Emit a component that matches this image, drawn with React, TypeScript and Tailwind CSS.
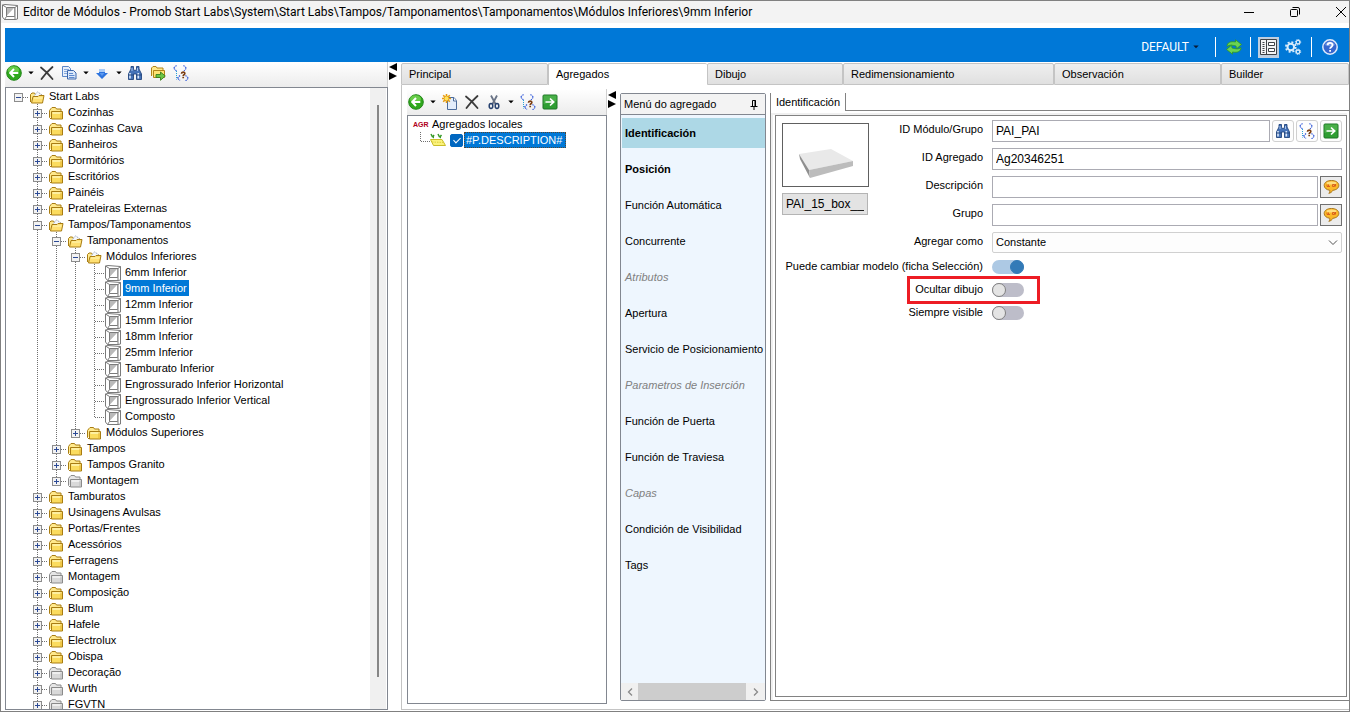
import React, { useState } from "react";

type Kind = "folder" | "gray" | "module";
type NodeData = { label: string; kind?: Kind; open?: boolean; children?: NodeData[]; selected?: boolean };

const leaf = (label: string, selected = false): NodeData => ({ label, kind: "module", selected });
const closed = (label: string, kind: Kind = "folder"): NodeData => ({ label, kind });

const TREE: NodeData = {
  label: "Start Labs",
  open: true,
  children: [
    closed("Cozinhas"),
    closed("Cozinhas Cava"),
    closed("Banheiros"),
    closed("Dormitórios"),
    closed("Escritórios"),
    closed("Painéis"),
    closed("Prateleiras Externas"),
    {
      label: "Tampos/Tamponamentos",
      open: true,
      children: [
        {
          label: "Tamponamentos",
          open: true,
          children: [
            {
              label: "Módulos Inferiores",
              open: true,
              children: [
                leaf("6mm Inferior"),
                leaf("9mm Inferior", true),
                leaf("12mm Inferior"),
                leaf("15mm Inferior"),
                leaf("18mm Inferior"),
                leaf("25mm Inferior"),
                leaf("Tamburato Inferior"),
                leaf("Engrossurado Inferior Horizontal"),
                leaf("Engrossurado Inferior Vertical"),
                leaf("Composto"),
              ],
            },
            closed("Módulos Superiores"),
          ],
        },
        closed("Tampos"),
        closed("Tampos Granito"),
        closed("Montagem", "gray"),
      ],
    },
    closed("Tamburatos"),
    closed("Usinagens Avulsas"),
    closed("Portas/Frentes"),
    closed("Acessórios"),
    closed("Ferragens"),
    closed("Montagem", "gray"),
    closed("Composição"),
    closed("Blum"),
    closed("Hafele"),
    closed("Electrolux"),
    closed("Obispa"),
    closed("Decoração", "gray"),
    closed("Wurth", "gray"),
    closed("FGVTN", "gray"),
  ],
};

/* ---------- icons ---------- */

function ModuleIcon() {
  return (
    <svg width="16" height="16" viewBox="0 0 16 16" fill="none" stroke="#7a7a7a" className="shrink-0">
      <path d="M.5 1 3 .5l12.500 1v13.500l-2.500.5H2.500L.5 13z" fill="#fff" />
      <path d="M4.500 3.500h8.500v9H4.500zM.5 1l4 2.500M15.500 1.500l-2.500 2M13 12.500v3M4.500 12.500l-2 3" />
      <path d="M5 4h7L5 11.500z" fill="#b9b9b9" stroke="none" />
      <path d="M12.500 4v8.500" stroke="#9a9a9a" />
    </svg>
  );
}

function FolderIcon({ gray = false }: { gray?: boolean }) {
  const edge = gray ? "#8a8a8a" : "#a87c12";
  return (
    <svg width="14" height="13" viewBox="0 0 14 13" className="shrink-0">
      <path d="M.5 10.500v-7l1.500-2L3 .5h3.500l1 1.500h4.500v2" fill={gray ? "#e6e6e6" : "#ffe98c"} stroke={edge} />
      <path d="M2.500 4.500h11v7.500H2.500z" fill={gray ? "#d9d9d9" : "#fbdc5e"} stroke={edge} />
      <path d="M.5 10.500l1.500 1.500" stroke={edge} />
      <path d="M3.500 6h9" stroke={gray ? "#f6f6f6" : "#fff7b8"} strokeWidth="1.500" />
      <path d="M12 5.500v6" stroke={gray ? "#bbb" : "#e3b233"} />
    </svg>
  );
}

function OpenFolderIcon() {
  return (
    <svg width="15" height="13" viewBox="0 0 15 13" className="shrink-0">
      <path d="M.5 11V3.500L2 2h2.500l1 1.500h6V6" fill="#ffe98c" stroke="#a87c12" />
      <path d="M3.500 5.500 7.500.8 12 4v3H4z" fill="#f4f6fa" stroke="#9aa5bd" strokeDasharray="1.200 .8" />
      <path d="M3 5.500h5l1-1h5l-1.500 7.500h-11z" fill="#ffe073" stroke="#a87c12" />
      <path d="M4 7h8.500" stroke="#fff7b8" />
    </svg>
  );
}

function BackIcon() {
  return (
    <svg width="16" height="16" viewBox="0 0 16 16" className="shrink-0">
      <circle cx="8" cy="8" r="7.300" fill="#2fa81c" stroke="#23871a" />
      <ellipse cx="7.500" cy="5" rx="5.500" ry="3.800" fill="#7fdb5b" opacity=".7" />
      <path d="M12.300 8H4.500M8 4 4.200 8 8 12" fill="none" stroke="#fff" strokeWidth="2" />
    </svg>
  );
}

function DeleteIcon() {
  return (
    <svg width="16" height="16" viewBox="0 0 16 16" className="shrink-0">
      <path d="M2 2.500C6 5.500 10 9.500 13.500 14M13.500 2C9.500 5.500 5.500 9.500 2.500 14" fill="none" stroke="#3c3c3c" strokeWidth="1.800" strokeLinecap="round" />
    </svg>
  );
}

function CopyIcon() {
  return (
    <svg width="16" height="16" viewBox="0 0 16 16" className="shrink-0">
      <path d="M1.500 1.500h6l2 2v8h-8z" fill="#e6effb" stroke="#5b86c7" />
      <path d="M3 4.500h5M3 6.500h5M3 8.500h5" stroke="#86a9dd" />
      <path d="M6.500 5.500h6l2.500 2.500v6h-8.500z" fill="#dbe8fa" stroke="#3c68ad" />
      <path d="M8 8.500h4M8 10.500h5.500M8 12.500h5.500" stroke="#5f8bcf" />
    </svg>
  );
}

function DownIcon() {
  return (
    <svg width="16" height="16" viewBox="0 0 16 16" className="shrink-0">
      <path d="M5 4h6v4h3l-6 6-6-6h3z" fill="#2d74de" />
      <path d="M5 4h6v3H5z" fill="#a9cbf7" />
      <path d="M5.500 8h5L8 11z" fill="#5d9bf0" />
    </svg>
  );
}

function BinocularsIcon() {
  return (
    <svg width="16" height="16" viewBox="0 0 16 16" className="shrink-0">
      <path d="M4 1.500h2.500V4l.8 1.500h1.400L9.500 4V1.500H12V4l2.500 5v5.500H9.500V9h-3v5.500h-5V9L4 4z" fill="#4573b8" stroke="#23467f" strokeWidth=".9" />
      <path d="M3 8v5.500M11.300 8v5.500" stroke="#dce9fb" strokeWidth="1.600" />
      <path d="M5 3v3M10.500 3v3" stroke="#a9c4ec" />
      <path d="M1.500 10h5M9.500 10h5" stroke="#23467f" />
    </svg>
  );
}

function FolderGoIcon() {
  return (
    <svg width="16" height="16" viewBox="0 0 16 16" className="shrink-0">
      <path d="M1.500 11V3L3 1.500h3L7 3h6v2" fill="#ffe98c" stroke="#b08418" />
      <path d="M3.500 5.500h11v7h-11z" fill="#ffe372" stroke="#b08418" />
      <path d="M6 9.500h4.500V7l4.800 4-4.800 4.300v-2.800H6z" fill="#6cc644" stroke="#3b7f1f" strokeWidth=".9" />
    </svg>
  );
}

function TreeHelpIcon() {
  return (
    <svg width="16" height="16" viewBox="0 0 16 16" className="shrink-0" fill="none">
      <path d="M3.500.5.500 3l3 3M10.500.5l3 2.500-2.500 3M7 10.500 4.500 13l2.500 2.500M12.500 10.500l3 2.500-3 3" stroke="#2b54d8" strokeWidth="1.100" strokeDasharray="1.400 .8" />
      <path d="M3.500 6v8.500" stroke="#25a3d8" strokeDasharray="1 1" />
      <path d="M8.500 8.800c0-2.200 3.300-2.200 3.300-.3 0 1.400-1.600 1.200-1.600 2.500M10.200 11.800v1.500" stroke="#7a3d12" strokeWidth="1.700" />
    </svg>
  );
}

function NewIcon() {
  return (
    <svg width="16" height="16" viewBox="0 0 16 16" className="shrink-0">
      <path d="M5.500 3.500h6.500l2.500 3v9H5.500z" fill="#e3edfb" stroke="#4c6c9c" />
      <path d="M11.500 3.500v3.500h3" fill="#fff" stroke="#4c6c9c" />
      <path d="M4.500 0v9M0 4.500h9M1.200 1.200l6.600 6.600M7.800 1.200 1.200 7.800" stroke="#e59a10" strokeWidth="1.600" />
      <circle cx="4.500" cy="4.500" r="2.400" fill="#ffe35c" stroke="#e59a10" strokeWidth=".7" />
    </svg>
  );
}

function ScissorsIcon() {
  return (
    <svg width="16" height="16" viewBox="0 0 16 16" className="shrink-0" fill="none">
      <path d="M5 1.500 9.500 10M11 1.500 6.500 10" stroke="#6a7486" strokeWidth="1.800" />
      <ellipse cx="5" cy="12" rx="1.800" ry="2.400" stroke="#26416f" strokeWidth="1.500" />
      <ellipse cx="11" cy="12" rx="1.800" ry="2.400" stroke="#26416f" strokeWidth="1.500" />
    </svg>
  );
}

function GoIcon() {
  return (
    <svg width="16" height="16" viewBox="0 0 16 16" className="shrink-0">
      <rect x="1" y="1" width="14" height="14" rx="1" fill="#2f9e33" stroke="#1d7424" />
      <path d="M1.500 1.500h13V7L1.500 10z" fill="#5cbb57" opacity=".6" />
      <path d="M3.500 8h8M8 4.500 11.700 8 8 11.500" fill="none" stroke="#fff" strokeWidth="1.700" />
    </svg>
  );
}

function RefreshIcon() {
  return (
    <svg width="16" height="16" viewBox="0 0 16 16" className="shrink-0">
      <path d="M1 7.500C1 3.500 4.500 2 9.500 3V.8l6 4.700-5 4.300L10 7C6 6 3.500 5.500 1 7.500z" fill="#6ad452" stroke="#2f9427" strokeWidth=".8" />
      <path d="M15 8.500c0 4-3.500 5.500-8.500 4.500v2.200l-6-4.700 5-4.300L6 9c4 1 6.500 1.500 9-.5z" fill="#6ad452" stroke="#2f9427" strokeWidth=".8" />
    </svg>
  );
}

function PanelIcon() {
  return (
    <svg width="17" height="16" viewBox="0 0 17 16" fill="none">
      <path d="M.5.5h16v15H.5z" fill="#f4f4f4" stroke="#3f4347" />
      <path d="M6.500 0v16" stroke="#3f4347" />
      <path d="M8.500 3.500h6v3h-6zM8.500 9.500h6v3h-6z" fill="#fff" stroke="#3f4347" />
      <path d="M2.500 3.500h2M2.500 5.500h2M2.500 7.500h2M2.500 9.500h2M2.500 11.500h2M2.500 13.500h2" stroke="#3f4347" />
    </svg>
  );
}

function GearsIcon() {
  return (
    <svg width="17" height="16" viewBox="0 0 17 16" fill="none" stroke="#d9ecfb">
      <circle cx="5.800" cy="8" r="3.300" strokeWidth="2" />
      <circle cx="5.800" cy="8" r="4.900" strokeWidth="1.800" strokeDasharray="2 1.850" />
      <circle cx="13" cy="3.200" r="1.800" strokeWidth="1.300" />
      <circle cx="13" cy="3.200" r="2.700" strokeWidth="1" strokeDasharray="1.200 .92" />
      <circle cx="13" cy="12.800" r="1.800" strokeWidth="1.300" />
      <circle cx="13" cy="12.800" r="2.700" strokeWidth="1" strokeDasharray="1.200 .92" />
    </svg>
  );
}

function HelpIcon() {
  return (
    <svg width="16" height="16" viewBox="0 0 16 16" fill="none">
      <circle cx="8" cy="8" r="7.200" fill="#3767cf" stroke="#dfe9fb" strokeWidth="1.500" />
      <path d="M3 6a5.300 5.300 0 0 1 10 0c-2 1.500-8 1.500-10 0z" fill="#8db1f0" opacity=".6" />
      <path d="M5.600 6.300c0-3.200 5-3.100 5-.2 0 1.900-2.500 1.900-2.500 3.700M8.100 11v1.800" stroke="#fff" strokeWidth="1.800" />
    </svg>
  );
}

function SpeechIcon() {
  return (
    <svg width="17" height="16" viewBox="0 0 17 16" className="shrink-0">
      <path d="M8.500 1.500c4.300 0 7.300 2 7.300 4.900 0 2.700-2.500 4.500-6 4.900-.8 1.700-2.200 2.700-4 3 .9-.9 1.200-1.900 1-3-3.300-.5-5.600-2.300-5.600-4.900 0-2.900 3-4.900 7.300-4.900z" fill="#fbb829" stroke="#a8771f" />
      <ellipse cx="8.500" cy="4" rx="5" ry="1.600" fill="#ffdf7f" />
      <path d="M4 5.500v2M5.500 5.500v2M4 7.500h3M9.500 5.500h2v2h-2zM12.500 5v2.500" stroke="#d9601e" fill="none" />
    </svg>
  );
}

function AggregateIcon() {
  return (
    <svg width="16" height="14" viewBox="0 0 16 14" className="shrink-0">
      <path d="M1 1l1.500 3M4 2 2.500 4.500M8 1l1.500 3M11.500 2l-2 2.500M3 4.500h1M10 4.500h1" stroke="#3a9b2b" strokeWidth="1.500" fill="none" />
      <path d="M.5 6.500h11.500l3.500 6H3.500z" fill="#fbf27c" stroke="#c9bd28" />
      <path d="M2 9l12.500.5" stroke="#dccf3a" strokeDasharray="1.500 1" />
    </svg>
  );
}

function Caret({ className = "text-black" }: { className?: string }) {
  return (
    <svg width="6" height="4" viewBox="0 0 6 4" className={"shrink-0 " + className}>
      <path d="M.3.500h5.400L3 3.300z" fill="currentColor" />
    </svg>
  );
}

function BoxPreview() {
  return (
    <svg width="60" height="34" viewBox="0 0 60 34">
      <path d="M3 7 35 2l22 12-44 9z" fill="#e9e9e9" />
      <path d="M3 7l10 16 1 8L4 12z" fill="#8f8f8f" />
      <path d="M13 23l44-9v5L14 31z" fill="#bcbcbc" />
    </svg>
  );
}

/* ---------- pieces ---------- */

function IconButton({ label, className = "", children }: { label: string; className?: string; children: React.ReactNode }) {
  return (
    <button type="button" aria-label={label} title={label} className={"flex shrink-0 items-center justify-center " + className}>
      {children}
    </button>
  );
}

function Splitter({ className = "" }: { className?: string }) {
  return (
    <div className={"w-3 shrink-0 " + className} role="separator" aria-orientation="vertical">
      <svg width="10" height="17" viewBox="0 0 10 17">
        <path d="M9 0v8L1 4zM1 9v8l8-4z" fill="#000" />
      </svg>
    </div>
  );
}

function Guide({ up = false, down = false, right = false }: { up?: boolean; down?: boolean; right?: boolean }) {
  return (
    <svg width="19" height="16" viewBox="0 0 19 16" className="shrink-0" stroke="#707070" strokeDasharray="1 1">
      {up && <path d="M9.500 0V9" />}
      {down && <path d="M9.500 8v8" />}
      {right && <path d="M10 9.500h9" />}
    </svg>
  );
}

function Expander({ open, up, down, onClick }: { open: boolean; up: boolean; down: boolean; onClick: () => void }) {
  return (
    <button type="button" aria-label={open ? "Contraer" : "Expandir"} onClick={onClick} className="shrink-0">
      <svg width="19" height="16" viewBox="0 0 19 16" className="block">
        <g stroke="#707070" strokeDasharray="1 1">
          {up && <path d="M9.500 0v5" />}
          {down && <path d="M9.500 14v2" />}
          <path d="M14 9.500h5" />
        </g>
        <rect x="5.500" y="5.500" width="8" height="8" fill="#f3f3f3" stroke="#8c8c8c" />
        <path d={open ? "M7 9.500h5" : "M7 9.500h5M9.500 7v5"} stroke="#2c4a96" />
      </svg>
    </button>
  );
}

function TreeNode({ node, guides, last, root = false }: { node: NodeData; guides: boolean[]; last: boolean; root?: boolean }) {
  const [open, setOpen] = useState(!!node.open);
  const isModule = node.kind === "module";
  return (
    <li role="treeitem" aria-selected={!!node.selected}>
      <div className="flex h-4">
        {guides.map((g, i) => (
          <Guide key={i} up={g} down={g} />
        ))}
        {isModule ? (
          <Guide up right down={!last} />
        ) : (
          <Expander open={open} up={!root} down={!last} onClick={() => setOpen(!open)} />
        )}
        <span className={"flex w-[19px] shrink-0 items-start " + (isModule ? "pt-px pl-px" : "pt-[3px] pl-0.5")}>
          {isModule ? <ModuleIcon /> : node.open ? <OpenFolderIcon /> : <FolderIcon gray={node.kind === "gray"} />}
        </span>
        <span className={"px-0.5 leading-4 whitespace-nowrap " + (node.selected ? "bg-[#0078d7] text-white" : "")}>{node.label}</span>
      </div>
      {open && node.children && (
        <ul role="group">
          {node.children.map((c, i) => (
            <TreeNode key={i} node={c} guides={[...guides, !last]} last={i === node.children!.length - 1} />
          ))}
        </ul>
      )}
    </li>
  );
}

const TABS = [
  { label: "Principal", width: "w-[147px]" },
  { label: "Agregados", width: "w-[159px]" },
  { label: "Dibujo", width: "w-[136px]" },
  { label: "Redimensionamiento", width: "w-[211px]" },
  { label: "Observación", width: "w-[167px]" },
  { label: "Builder", width: "flex-1" },
];

const MENU = [
  { label: "Identificación", style: "font-bold bg-[#add8e6]" },
  { label: "Posición", style: "font-bold" },
  { label: "Función Automática", style: "" },
  { label: "Concurrente", style: "" },
  { label: "Atributos", style: "italic text-[#808080]" },
  { label: "Apertura", style: "" },
  { label: "Servicio de Posicionamiento", style: "" },
  { label: "Parametros de Inserción", style: "italic text-[#808080]" },
  { label: "Función de Puerta", style: "" },
  { label: "Función de Traviesa", style: "" },
  { label: "Capas", style: "italic text-[#808080]" },
  { label: "Condición de Visibilidad", style: "" },
  { label: "Tags", style: "" },
];

const FIELD = "h-[22px] min-w-0 flex-1 border border-[#ababb3] bg-white px-[3px] text-[12px] outline-none";
const SMALL_BUTTON = "size-[22px] rounded-[3px] border border-[#d0d0d0] bg-[#fdfdfd]";
const TEXT_BUTTON = "size-[22px] border border-[#707070] bg-[#ececec]";

function FieldLabel({ htmlFor, children }: { htmlFor: string; children: React.ReactNode }) {
  return (
    <label htmlFor={htmlFor} className="col-start-2 text-right leading-[18px] whitespace-nowrap">
      {children}
    </label>
  );
}

function SwitchRow({ id, label, on = false, marked = false }: { id: string; label: string; on?: boolean; marked?: boolean }) {
  return (
    <div className="flex h-[23px] w-[242px] items-center justify-end">
      <div className="relative flex items-center gap-[9px]">
        <label htmlFor={id} className="pb-0.5 leading-[14px] whitespace-nowrap">
          {label}
        </label>
        <input
          id={id}
          type="checkbox"
          role="switch"
          defaultChecked={on}
          className="h-[14px] w-8 appearance-none rounded-full bg-[#bdbdc9] before:block before:size-[14px] before:rounded-full before:border before:border-[#808080] before:bg-[#e4e4e4] checked:bg-[#adc9e4] checked:before:ml-[18px] checked:before:border-[#337ab7] checked:before:bg-[#337ab7]"
        />
        {marked && <span className="pointer-events-none absolute -top-[6px] -right-4 -bottom-[6px] -left-2 border-3 border-[#ed1c24]" />}
      </div>
    </div>
  );
}

/* ---------- page ---------- */

export default function App() {
  return (
    <div className="flex h-screen flex-col overflow-hidden border border-[#808080] bg-white font-['Liberation_Sans',Arial,sans-serif] text-[11px] text-black">
      <header className="flex h-[22px] shrink-0 items-center bg-[#f3f3f3] pr-0.5 pl-px font-[Roboto,'Open_Sans',sans-serif] text-[12px]">
        <ModuleIcon />
        <h1 className="ml-[5px] flex-1 truncate">
          Editor de Módulos - Promob Start Labs\System\Start Labs\Tampos/Tamponamentos\Tamponamentos\Módulos Inferiores\9mm Inferior
        </h1>
        <div className="flex items-center gap-[34px]">
          <IconButton label="Minimizar">
            <svg width="12" height="12" stroke="#000">
              <path d="M1 6.500h10" />
            </svg>
          </IconButton>
          <IconButton label="Restaurar">
            <svg width="12" height="12" fill="none" stroke="#000">
              <rect x="1.500" y="3.500" width="7" height="7" rx="1" />
              <path d="M3.500 1.500H9q1.500 0 1.500 1.500v5.500" />
            </svg>
          </IconButton>
          <IconButton label="Cerrar">
            <svg width="12" height="12" stroke="#000">
              <path d="M1 1l10 10M11 1 1 11" />
            </svg>
          </IconButton>
        </div>
      </header>

      <div className="mt-[5px] ml-1 flex h-[34px] shrink-0 items-center justify-end bg-[#0078d7] pt-1 pr-[11px]">
        <button type="button" className="mr-4 flex items-center gap-1 font-[Roboto,'Open_Sans',sans-serif] text-[12px] text-white">
          DEFAULT <Caret className="text-[#0a1a33]" />
        </button>
        <span className="mr-[10px] h-5 w-px bg-white" />
        <IconButton label="Actualizar">
          <RefreshIcon />
        </IconButton>
        <span className="mr-[7px] ml-2 h-5 w-px bg-white" />
        <IconButton label="Panel" className="mr-[6px] size-[21px] bg-[#bfcfe0]">
          <PanelIcon />
        </IconButton>
        <IconButton label="Configuración">
          <GearsIcon />
        </IconButton>
        <span className="mr-[10px] ml-[9px] h-5 w-px bg-white" />
        <IconButton label="Ayuda">
          <HelpIcon />
        </IconButton>
      </div>

      <main className="flex min-h-0 flex-1 pb-px pl-1">
        {/* module library */}
        <section className="flex w-[383px] shrink-0 flex-col">
          <div className="flex h-[25px] shrink-0 items-center border-r border-[#d0d0d0] bg-linear-to-b from-white to-[#ececec] pb-[3px] pl-px">
            <IconButton label="Volver"><BackIcon /></IconButton>
            <IconButton label="Opciones de volver" className="mr-[5px] ml-[6px]"><Caret /></IconButton>
            <IconButton label="Eliminar" className="mr-[6px]"><DeleteIcon /></IconButton>
            <IconButton label="Copiar"><CopyIcon /></IconButton>
            <IconButton label="Opciones de copiar" className="mr-[5px] ml-[6px]"><Caret /></IconButton>
            <IconButton label="Bajar"><DownIcon /></IconButton>
            <IconButton label="Opciones de bajar" className="mr-[5px] ml-[6px]"><Caret /></IconButton>
            <IconButton label="Buscar" className="mr-[7px]"><BinocularsIcon /></IconButton>
            <IconButton label="Ir a carpeta" className="mr-[7px]"><FolderGoIcon /></IconButton>
            <IconButton label="Referencias"><TreeHelpIcon /></IconButton>
          </div>
          <div className="flex min-h-0 flex-1 border border-[#828790]">
            <ul role="tree" aria-label="Módulos" className="min-w-0 flex-1 overflow-hidden pl-[3px]">
              <TreeNode node={TREE} guides={[]} last root />
            </ul>
            <div className="mr-px flex w-4 shrink-0 justify-center bg-[#f0f0f0]">
              <div className="mt-[17px] mb-8 w-0.5 bg-[#868686]" />
            </div>
          </div>
        </section>

        <Splitter className="pt-px" />

        <section className="ml-px flex min-w-0 flex-1 flex-col">
          <div role="tablist" className="flex h-[23px] shrink-0 pt-px">
            {TABS.map((t, i) => (
              <button
                key={t.label}
                type="button"
                role="tab"
                aria-selected={i === 1}
                className={
                  "rounded-t-[2px] border-t border-l border-[#c4c4c4] pl-[7px] text-left " +
                  t.width +
                  (i === 1 ? " bg-white" : " border-r border-b bg-linear-to-b from-[#efefef] to-[#e0e0e0]")
                }
              >
                {t.label}
              </button>
            ))}
          </div>

          <div className="flex min-h-0 flex-1 border-b border-l border-[#c4c4c4] pl-[5px]">
            {/* local aggregates */}
            <section className="flex w-[200px] shrink-0 flex-col pt-1 pb-[5px]">
              <div className="flex h-[26px] shrink-0 items-center border-r border-[#d0d0d0] bg-linear-to-b from-white to-[#ececec] pb-px pl-px">
                <IconButton label="Volver"><BackIcon /></IconButton>
                <IconButton label="Opciones de volver" className="mr-[6px] ml-[6px]"><Caret /></IconButton>
                <IconButton label="Nuevo" className="mr-[6px]"><NewIcon /></IconButton>
                <IconButton label="Eliminar" className="mr-[6px]"><DeleteIcon /></IconButton>
                <IconButton label="Cortar"><ScissorsIcon /></IconButton>
                <IconButton label="Opciones de cortar" className="mr-[6px] ml-[6px]"><Caret /></IconButton>
                <IconButton label="Referencias" className="mr-[6px]"><TreeHelpIcon /></IconButton>
                <IconButton label="Ir"><GoIcon /></IconButton>
              </div>
              <ul role="tree" aria-label="Agregados" className="min-h-0 flex-1 border border-[#828790] pl-[5px]">
                <li role="treeitem" className="flex h-4 items-center gap-1">
                  <span className="w-[15px] pt-0.5 text-[7px] font-bold text-[#b00020]">AGR</span>
                  <span className="leading-4">Agregados locales</span>
                </li>
                <li role="treeitem" className="flex h-4 items-center">
                  <svg width="17" height="16" fill="none" stroke="#707070" strokeDasharray="1 1" className="shrink-0">
                    <path d="M7.500 0v9M8 9.500h9" />
                  </svg>
                  <AggregateIcon />
                  <input
                    id="description"
                    type="checkbox"
                    defaultChecked
                    className="mx-px ml-1 size-[13px] shrink-0 appearance-none rounded-[2px] border border-[#0067c0] before:mx-auto before:mt-px before:block before:h-[7px] before:w-1 before:rotate-45 before:border-r before:border-b before:border-white checked:bg-[#0067c0]"
                  />
                  <label htmlFor="description" className="bg-[#0078d7] pr-1 pl-0.5 leading-4 whitespace-nowrap text-white outline-1 -outline-offset-1 outline-dotted outline-[#5a4630]">
                    #P.DESCRIPTION#
                  </label>
                </li>
              </ul>
            </section>

            <Splitter className="pt-1.5" />

            {/* aggregate menu */}
            <nav className="mt-2 mb-2 ml-px flex w-[146px] shrink-0 flex-col rounded-[2px] border border-[#828790] bg-[#eef6fe]">
              <div className="flex h-[21px] shrink-0 items-center justify-between border-b border-[#828790] bg-[#f3f3f3] pr-[7px] pl-[3px]">
                <span>Menú do agregado</span>
                <button type="button" aria-label="Fijar">
                  <svg width="8" height="11" fill="none" stroke="#000">
                    <path d="M2.500 7V1.500h3V7M5 1v6M.5 7.500h7M4 7.500V11" />
                  </svg>
                </button>
              </div>
              <ul className="min-h-0 flex-1 overflow-hidden pt-[3px] pl-px">
                {MENU.map((m) => (
                  <li key={m.label} className="mb-[6px]">
                    <a href="#" className={"block h-[30px] pl-[3px] leading-[30px] whitespace-nowrap " + m.style}>
                      {m.label}
                    </a>
                  </li>
                ))}
              </ul>
              <div className="flex h-[17px] shrink-0 bg-[#f0f0f0]">
                <IconButton label="Desplazar a la izquierda" className="w-[17px]">
                  <svg width="6" height="8" fill="none" stroke="#8a8a8a" strokeWidth="1.300"><path d="M5 .5 1.500 4 5 7.500" /></svg>
                </IconButton>
                <div className="flex-1 bg-[#cdcdcd]" />
                <IconButton label="Desplazar a la derecha" className="w-[19px]">
                  <svg width="6" height="8" fill="none" stroke="#8a8a8a" strokeWidth="1.300"><path d="M1 .5 4.500 4 1 7.500" /></svg>
                </IconButton>
              </div>
            </nav>

            {/* identification form */}
            <section className="mt-2 mb-2 ml-1 flex min-w-0 flex-1 flex-col">
              <div role="tablist" className="flex h-[18px] shrink-0">
                <button type="button" role="tab" aria-selected="true" className="w-[76px] border-r border-l border-[#828282] text-center whitespace-nowrap">
                  Identificación
                </button>
                <span className="flex-1 border-b border-[#828282]" />
              </div>
              <div className="min-h-0 flex-1 border-b border-l border-[#828282] pt-0.5 pr-0.5">
                <div className="h-full border-t-2 border-l-2 border-[#f0f0f0] pb-[3px] pl-0.5">
                  <div className="h-full border border-[#828282] pt-1 pr-1 pl-[6px]">
                    <div className="grid auto-rows-[22px] grid-cols-[87px_114px_minmax(0,1fr)] gap-y-[6px]">
                      <div className="row-span-5 flex flex-col gap-[6px] pt-[3px]">
                        <div className="flex h-16 items-start justify-center border border-[#606060] pt-[23px]">
                          <BoxPreview />
                        </div>
                        <input aria-label="Modelo" readOnly defaultValue="PAI_15_box____" className="h-[22px] w-[86px] border border-[#b4b4b4] bg-[#e3e3e3] px-[3px] text-[12px] outline-none" />
                      </div>

                      <FieldLabel htmlFor="modulo">ID Módulo/Grupo</FieldLabel>
                      <div className="ml-[9px] flex gap-0.5">
                        <input id="modulo" className={FIELD} defaultValue="PAI_PAI" />
                        <IconButton label="Buscar módulo" className={SMALL_BUTTON}><BinocularsIcon /></IconButton>
                        <IconButton label="Referencias" className={SMALL_BUTTON}><TreeHelpIcon /></IconButton>
                        <IconButton label="Ir al módulo" className={SMALL_BUTTON}><GoIcon /></IconButton>
                      </div>

                      <FieldLabel htmlFor="agregado">ID Agregado</FieldLabel>
                      <div className="ml-[9px] flex">
                        <input id="agregado" className={FIELD} defaultValue="Ag20346251" />
                      </div>

                      <FieldLabel htmlFor="descripcion">Descripción</FieldLabel>
                      <div className="ml-[9px] flex gap-0.5">
                        <input id="descripcion" className={FIELD} />
                        <IconButton label="Traducir descripción" className={TEXT_BUTTON}><SpeechIcon /></IconButton>
                      </div>

                      <FieldLabel htmlFor="grupo">Grupo</FieldLabel>
                      <div className="ml-[9px] flex gap-0.5">
                        <input id="grupo" className={FIELD} />
                        <IconButton label="Traducir grupo" className={TEXT_BUTTON}><SpeechIcon /></IconButton>
                      </div>

                      <FieldLabel htmlFor="como">Agregar como</FieldLabel>
                      <div className="relative ml-[9px] flex">
                        <select id="como" className="h-[21px] flex-1 appearance-none rounded-[2px] border border-[#d0d0d0] bg-[#fdfdfd] px-[3px] outline-none">
                          <option>Constante</option>
                        </select>
                        <svg width="10" height="6" fill="none" stroke="#505050" className="pointer-events-none absolute top-2 right-1">
                          <path d="M1 .5 5 4.500 9 .5" />
                        </svg>
                      </div>
                    </div>
                    <div className="mt-px">
                      <SwitchRow id="modelo" label="Puede cambiar modelo (ficha Selección)" on />
                      <SwitchRow id="ocultar" label="Ocultar dibujo" marked />
                      <SwitchRow id="visible" label="Siempre visible" />
                    </div>
                  </div>
                </div>
              </div>
            </section>
          </div>
        </section>
      </main>
    </div>
  );
}
